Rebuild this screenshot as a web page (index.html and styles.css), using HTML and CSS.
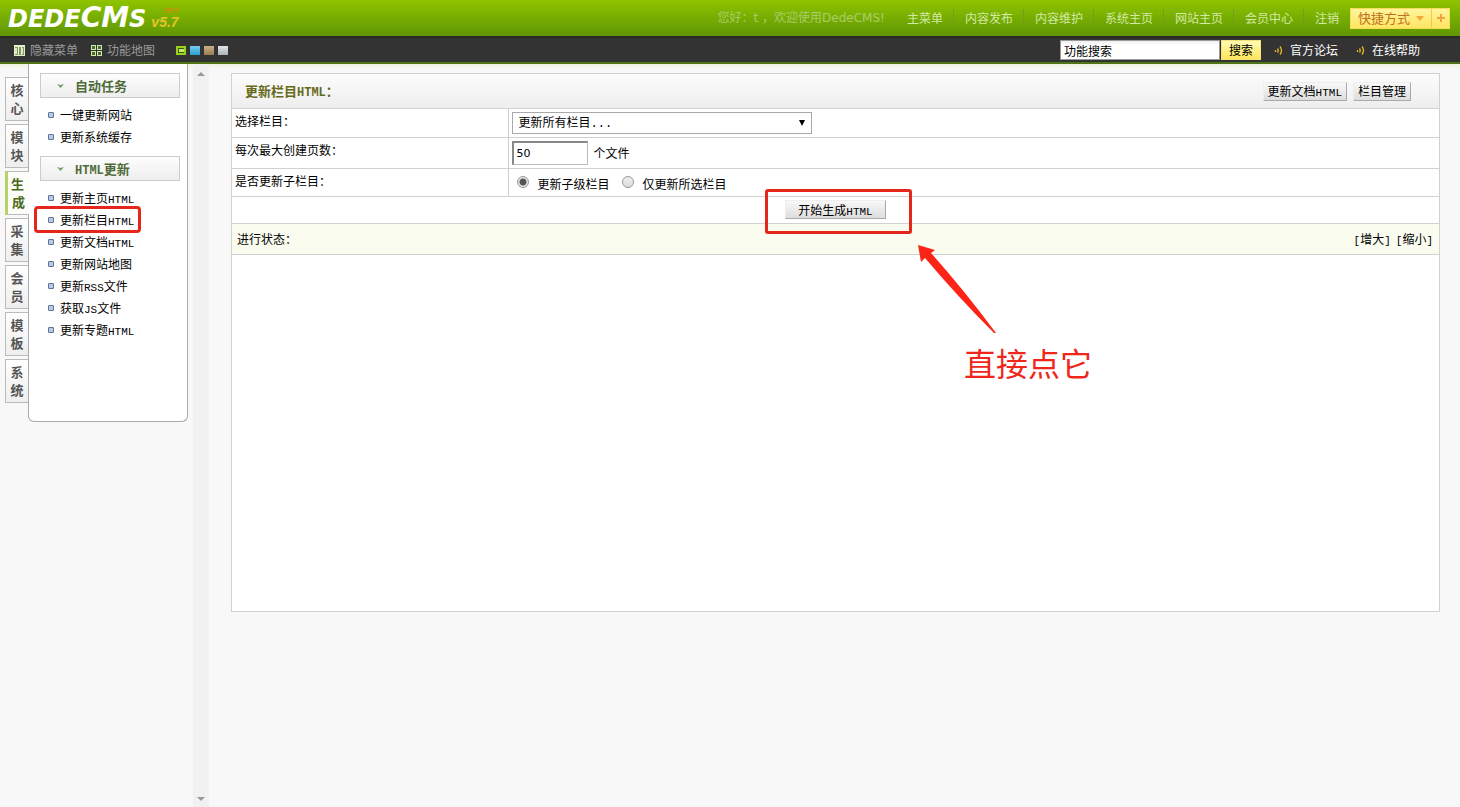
FILE: index.html
```html
<!DOCTYPE html>
<html lang="zh-CN">
<head>
<meta charset="utf-8">
<title>DedeCMS</title>
<link rel="stylesheet" href="styles.css">
</head>
<body>
<header class="topbar">
  <div class="logo"><span class="logo-name">DEDE<span class="logo-big">CM</span>S</span><span class="logo-version"><small>SP2</small>v5.7</span></div>
  <div class="topnav">
    <span class="greeting">您好：t ，欢迎使用DedeCMS!</span>
    <nav class="links">
      <a href="#">主菜单</a><a href="#">内容发布</a><a href="#">内容维护</a><a href="#">系统主页</a><a href="#">网站主页</a><a href="#">会员中心</a><a href="#">注销</a>
    </nav>
    <div class="shortcut">
      <button type="button" class="shortcut-main">快捷方式 <svg width="8" height="5" viewBox="0 0 8 5"><path d="M0 0H8L4 5Z" fill="#f3a93a"/></svg></button>
      <button type="button" class="shortcut-add" aria-label="添加"><svg width="8" height="8" viewBox="0 0 8 8"><path d="M3 0H5V3H8V5H5V8H3V5H0V3H3Z" fill="#f2a33c"/></svg></button>
    </div>
  </div>
</header>
<div class="toolbar">
  <div class="tools">
    <a href="#" class="tool"><svg width="11" height="11" viewBox="0 0 11 11"><path d="M0 0H11V11H0Z" fill="#e4efcf"/><path d="M1 2H4V10H1ZM5 2H7V10H5ZM8 2H10V10H8Z" fill="#7f9a5c"/><path d="M1 3H3V9H1ZM8 3H9V9H8Z" fill="#dbe8c5"/></svg>隐藏菜单</a>
    <a href="#" class="tool"><svg width="11" height="11" viewBox="0 0 11 11"><path d="M0 0H5V5H0ZM6 0H11V5H6ZM0 6H5V11H0ZM6 6H11V11H6Z" fill="#d3e8ad"/><path d="M1 1H4V4H1ZM7 1H10V4H7ZM1 7H4V10H1ZM7 7H10V10H7Z" fill="#4d6a2c"/></svg>功能地图</a>
    <div class="skins">
      <button type="button" class="skin skin-green" aria-label="绿色"><svg width="10" height="9" viewBox="0 0 10 9"><path d="M0 0H10V9H0Z" fill="#9bcf1e"/><path d="M2 2H8V7H2Z" fill="#42590f"/><path d="M3 3H8V6H3Z" fill="#c3e868"/></svg></button>
      <button type="button" class="skin skin-blue" aria-label="蓝色"></button>
      <button type="button" class="skin skin-brown" aria-label="棕色"></button>
      <button type="button" class="skin skin-gray" aria-label="灰色"></button>
    </div>
  </div>
  <div class="help">
    <form class="search"><input type="text" value="功能搜索" aria-label="功能搜索"><button type="button">搜索</button></form>
    <a href="#" class="help-link"><svg width="9" height="9" viewBox="0 0 9 9" fill="none" stroke="#e5b923"><path d="M1.5 4V6M3.500 2.500Q5 4.500 3.500 6.500M6 .5Q9 4.500 6 8.500" stroke-width="1.300"/></svg>官方论坛</a>
    <a href="#" class="help-link"><svg width="9" height="9" viewBox="0 0 9 9" fill="none" stroke="#e5b923"><path d="M1.5 4V6M3.500 2.500Q5 4.500 3.500 6.500M6 .5Q9 4.500 6 8.500" stroke-width="1.300"/></svg>在线帮助</a>
  </div>
</div>
<div class="page">
  <aside class="sidebar">
    <nav class="tabs">
      <a href="#" class="tab">核<br>心</a>
      <a href="#" class="tab">模<br>块</a>
      <a href="#" class="tab tab-active">生<br>成</a>
      <a href="#" class="tab">采<br>集</a>
      <a href="#" class="tab">会<br>员</a>
      <a href="#" class="tab">模<br>板</a>
      <a href="#" class="tab">系<br>统</a>
    </nav>
    <div class="menu">
      <h2 class="menu-title"><svg width="7" height="4" viewBox="0 0 7 4"><path d="M0 0L3.500 1L7 0L3.500 4Z" fill="#6fa05e"/></svg>自动任务</h2>
      <ul class="menu-list">
        <li><a href="#">一键更新网站</a></li>
        <li><a href="#">更新系统缓存</a></li>
      </ul>
      <h2 class="menu-title"><svg width="7" height="4" viewBox="0 0 7 4"><path d="M0 0L3.500 1L7 0L3.500 4Z" fill="#6fa05e"/></svg><span><span class="latin-bold">HTML</span>更新</span></h2>
      <ul class="menu-list">
        <li><a href="#">更新主页<span class="latin">HTML</span></a></li>
        <li class="marked"><a href="#">更新栏目<span class="latin">HTML</span></a></li>
        <li><a href="#">更新文档<span class="latin">HTML</span></a></li>
        <li><a href="#">更新网站地图</a></li>
        <li><a href="#">更新<span class="latin">RSS</span>文件</a></li>
        <li><a href="#">获取<span class="latin">JS</span>文件</a></li>
        <li><a href="#">更新专题<span class="latin">HTML</span></a></li>
      </ul>
    </div>
  </aside>
  <div class="scrollbar">
    <svg width="8" height="4" viewBox="0 0 8 4"><path d="M0 4L4 0L8 4Z" fill="#999"/></svg>
    <svg width="8" height="4" viewBox="0 0 8 4"><path d="M0 0L4 4L8 0Z" fill="#999"/></svg>
  </div>
  <main class="content">
    <div class="panel-head">
      <h1>更新栏目<span class="latin-bold">HTML</span>：</h1>
      <div class="panel-actions">
        <button type="button" class="btn">更新文档<span class="latin">HTML</span></button>
        <button type="button" class="btn">栏目管理</button>
      </div>
    </div>
    <table class="form">
      <tr class="row-select">
        <th><label for="column">选择栏目：</label></th>
        <td><div class="select-box"><select id="column"><option>更新所有栏目...</option></select><svg width="6" height="6" viewBox="0 0 6 6"><path d="M0 0H6L3 6Z" fill="#000"/></svg></div></td>
      </tr>
      <tr class="row-pages">
        <th><label for="pages">每次最大创建页数：</label></th>
        <td><div class="inline"><input type="text" id="pages" class="number" value="50">个文件</div></td>
      </tr>
      <tr class="row-radio">
        <th>是否更新子栏目：</th>
        <td><div class="radios"><input type="radio" name="sub" id="sub1" checked><label for="sub1">更新子级栏目</label><input type="radio" name="sub" id="sub2"><label for="sub2">仅更新所选栏目</label></div></td>
      </tr>
      <tr class="row-submit">
        <td colspan="2">
          <div class="submit">
            <button type="button" class="btn btn-start">开始生成<span class="latin">HTML</span></button>
            <span class="frame"></span>
            <svg class="arrow" width="78" height="90" viewBox="0 0 78 90"><path d="M0 0L17 5L13 8Q46 45 78 88L76 88Q40 52 7 13L3 17Z" fill="#fb2416"/></svg>
            <span class="note">直接点它</span>
          </div>
        </td>
      </tr>
    </table>
    <div class="status"><span>进行状态：</span><span class="resize"><a href="#"><span class="bracket">[</span>增大<span class="bracket">]</span></a><a href="#"><span class="bracket">[</span>缩小<span class="bracket">]</span></a></span></div>
    <div class="result"></div>
  </main>
</div>
</body>
</html>
```
FILE: styles.css
```css
*, *::before, *::after { box-sizing: border-box; }
body {
  margin: 0;
  min-height: 100vh;
  display: flex;
  flex-direction: column;
  background: #f8f8f8;
  color: #000;
  font: 12px/18px "Noto Sans CJK SC", sans-serif;
}
a { color: inherit; text-decoration: none; }
button, input, select { font: inherit; color: inherit; margin: 0; }
svg { flex: none; }
.latin { font-family: "Liberation Mono", monospace; font-size: 11px; line-height: 1; }
.latin-bold { font-family: "Liberation Mono", monospace; font-size: 12px; line-height: 1; }
.bracket { font-family: "Liberation Mono", monospace; font-size: 11px; line-height: 1; }

.topbar {
  height: 36px;
  display: flex;
  justify-content: space-between;
  padding: 0 10px 0 8px;
  background: linear-gradient(#8fc400, #5f9604);
}
.logo { display: flex; align-items: center; gap: 5px; color: #fff; font-family: "DejaVu Sans", sans-serif; font-weight: bold; font-style: italic; }
.logo-name { font-size: 24px; line-height: 36px; }
.logo-big { font-size: 28px; }
.logo-version { display: flex; flex-direction: column; font: italic bold 14px/14px "Liberation Sans", sans-serif; color: #e3c52c; }
.logo-version small { font: 8px/8px "Liberation Sans", sans-serif; color: #e08010; text-align: right; }
.topnav { display: flex; align-items: center; color: #d3e9a4; }
.greeting { color: #a9cd68; font-family: "DejaVu Sans", "Noto Sans CJK SC", sans-serif; margin-right: 11px; }
.links { display: flex; }
.links a { padding: 0 10px 0 11px; border-right: 1px solid #6c9f1b; }
.links a:last-child { padding-right: 11px; border-right: 0; }
.shortcut { display: flex; height: 21px; border: 1px solid #f7dc58; background: linear-gradient(#fff59c, #ffe563); }
.shortcut button { display: flex; align-items: center; justify-content: center; padding: 0; border: 0; background: none; color: #c07022; }
.shortcut .shortcut-main { width: 81px; gap: 6px; font-size: 13px; border-right: 1px solid #f5c944; }
.shortcut .shortcut-add { width: 17px; }

.toolbar {
  height: 28px;
  display: flex;
  justify-content: space-between;
  padding: 0 40px 0 14px;
  background: #333;
  border-top: 2px solid #272b22;
  border-bottom: 2px solid #4f7415;
}
.tools, .help, .search, .tool, .help-link { display: flex; align-items: center; }
.tools { color: #999; gap: 13px; }
.tool { gap: 5px; }
.skins { display: flex; gap: 4px; margin-left: 8px; }
.skin { display: flex; width: 10px; height: 9px; padding: 0; border: 0; }
.skin-blue { background: linear-gradient(#75ccef, #2b9ed3); }
.skin-brown { background: linear-gradient(#c7af88, #997c52); }
.skin-gray { background: linear-gradient(#e2e6e9, #aab1b5); }
.help { color: #fff; }
.search { color: #000; gap: 1px; }
.search input { width: 160px; height: 20px; padding: 0 3px; border: 1px solid #999; background: linear-gradient(#eee, #fff 4px); }
.search button { width: 40px; height: 20px; padding: 0; border: 1px solid #f7e277; background: linear-gradient(#fffbb4, #ffe75a); line-height: 18px; }
.help-link { margin-left: 18px; gap: 7px; }
.search + .help-link { margin-left: 13px; }

.page { flex: 1; display: flex; align-items: stretch; background: linear-gradient(#eef3de, #f8f8f8 5px); }
.sidebar { width: 193px; flex: none; display: flex; align-items: flex-start; padding: 0 5px; }
.tabs { display: flex; flex-direction: column; gap: 3px; padding-top: 13px; }
.tab { width: 23px; height: 44px; padding: 3px 0 0; border: 1px solid #bbb; border-right: 0; background: linear-gradient(#fff, #eee); color: #555; font-size: 13px; line-height: 18px; font-weight: bold; text-align: center; }
.tab-active { border-left: 3px solid #b4d465; margin-right: -1px; width: 24px; background: #fcfdf8; color: #4b6a1c; text-indent: -2px; z-index: 1; }
.menu { width: 160px; height: 358px; padding: 9px 7px 0 11px; background: #fff; border: 1px solid #aaa; border-top: 0; border-radius: 0 0 6px 6px; }
.menu-title { display: flex; align-items: center; height: 25px; margin: 0; padding-left: 16px; border: 1px solid #ccc; background: linear-gradient(#fdfdfd, #eee); color: #4f6b3a; font-size: 13px; }
.menu-title svg { margin-right: 11px; }
.menu-list { list-style: none; margin: 0 0 8px; padding: 6px 0 0 8px; }
.menu-list li { position: relative; height: 22px; line-height: 22px; display: flex; align-items: center; }
.menu-list li::before { content: ""; width: 6px; height: 6px; margin-right: 6px; border: 1px solid #5f7396; border-radius: 1px; background: #b8cbe3; }
.marked::after { content: ""; position: absolute; left: -14px; top: -3px; width: 107px; height: 27px; border: 3px solid #e5261b; border-radius: 4px; pointer-events: none; }

.scrollbar { width: 16px; flex: none; display: flex; flex-direction: column; justify-content: space-between; align-items: center; padding: 8px 0 6px; background: #f1f1f1; }

.content { flex: 1; align-self: flex-start; margin: 9px 20px 0 22px; border: 1px solid #d1d1d1; background: #fff; }
.panel-head { height: 35px; display: flex; align-items: center; justify-content: space-between; padding: 0 28px 0 13px; border-bottom: 1px solid #d1d1d1; background: linear-gradient(#fcfcfc, #eee); }
.panel-head h1 { margin: 0; font-size: 13px; color: #666a18; }
.panel-actions { display: flex; gap: 6px; }
.btn { height: 19px; padding: 0 4px; border: 1px solid #eee; border-right-color: #aaa; border-bottom-color: #aaa; background: linear-gradient(#f8f8f8, #ddd); line-height: 16px; }
.form { width: 100%; border-collapse: collapse; }
.form tr { border-bottom: 1px solid #d1d1d1; }
.form th { width: 276px; padding: 3px 3px 0; border-right: 1px solid #d1d1d1; font-weight: normal; text-align: left; vertical-align: top; }
.form td { padding: 0 3px; }
.row-select { height: 28px; }
.row-pages { height: 31px; }
.row-radio { height: 28px; }
.row-submit { height: 27px; }
.select-box { position: relative; width: 300px; height: 22px; }
.select-box select { width: 100%; height: 100%; padding: 2px 6px 0; border: 1px solid #a9a9a9; background: #fff; appearance: none; font-family: "Liberation Mono", "Noto Sans CJK SC", monospace; }
.select-box svg { position: absolute; right: 7px; top: 8px; pointer-events: none; }
.inline { display: flex; align-items: center; gap: 6px; }
.number { width: 76px; height: 24px; padding: 0 3px; border: 1px solid #bbb; border-top: 2px solid #888; border-left: 2px solid #888; font: 11px "DejaVu Sans", sans-serif; }
.radios { display: flex; align-items: center; padding-left: 5px; }
.radios input { appearance: none; width: 12px; height: 12px; border: 1px solid #999; border-radius: 50%; background: linear-gradient(#eee, #ddd); }
.radios input:checked { background: radial-gradient(#555 0 3px, #e6e6e6 4px); }
.radios label { margin: 3px 12px 0 9px; }
.submit { position: relative; width: 101px; margin: 0 auto; display: flex; }
.btn-start { width: 100%; }
.frame { position: absolute; left: -20px; top: -11px; width: 147px; height: 45px; border: 3px solid #e5261b; border-radius: 3px; pointer-events: none; }
.arrow { position: absolute; left: 133px; top: 45px; pointer-events: none; }
.note { position: absolute; left: 179px; top: 142px; color: #ee261b; font-size: 32px; line-height: 40px; white-space: nowrap; font-weight: normal; }
.status { height: 31px; display: flex; align-items: center; justify-content: space-between; padding: 0 6px 0 5px; border-bottom: 1px solid #d1d1d1; background: #f9fcef; }
.resize { display: flex; gap: 5px; }
.result { height: 356px; }
```
